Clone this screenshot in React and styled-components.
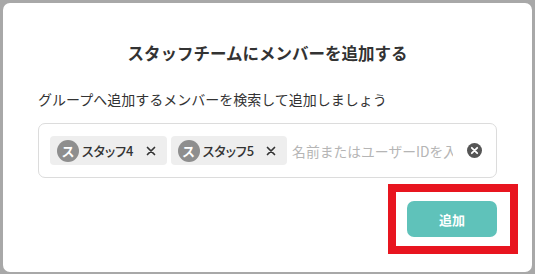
import React from "react";
import styled, { createGlobalStyle } from "styled-components";

const Global = createGlobalStyle`
  html, body { margin: 0; padding: 0; }
  body {
    background: #a8a8a8;
    font-family: "Noto Sans CJK JP", "Noto Sans", sans-serif;
    color: #333;
  }
  #root { padding: 3px 3px 2px 3px; }
`;

const Modal = styled.div`
  background: #fff;
  border-radius: 7px;
  height: 269px;
  box-sizing: border-box;
  padding: 38px 35px 0 35px;
  display: flex;
  flex-direction: column;
`;

const Title = styled.h2`
  margin: 0;
  font-size: 16.5px;
  line-height: 24px;
  font-weight: 700;
  text-align: center;
  color: #333;
`;

const Lead = styled.p`
  margin: 24px 0 0 0;
  font-size: 14px;
  line-height: 20px;
  color: #333;
`;

const Field = styled.div`
  margin-top: 14px;
  height: 55px;
  box-sizing: border-box;
  border: 1px solid #dcdcdc;
  border-radius: 7px;
  display: flex;
  align-items: center;
  padding: 0 14px 0 11px;
  gap: 4px;
`;

const Chip = styled.span`
  display: inline-flex;
  align-items: center;
  height: 29px;
  padding: 0 11px 0 7px;
  background: #eeeeee;
  border-radius: 4px;
  flex-shrink: 0;
`;

const Avatar = styled.span`
  width: 22px;
  height: 22px;
  border-radius: 50%;
  background: #8e8e8e;
  color: #fff;
  font-size: 13px;
  font-weight: 700;
  display: inline-flex;
  align-items: center;
  justify-content: center;
  margin-right: 3px;
`;

const ChipName = styled.span`
  font-size: 13px;
  font-weight: 500;
  color: #333;
  font-feature-settings: "palt";
`;

const Remove = styled.span`
  display: inline-flex;
  margin-left: 12px;
  color: #333;
`;

const Search = styled.input`
  flex: 1;
  min-width: 0;
  border: none;
  outline: none;
  background: transparent;
  font-family: inherit;
  font-size: 13.8px;
  color: #333;
  padding: 0 0 0 1px;
  &::placeholder { color: #b5b5b5; }
`;

const Clear = styled.span`
  display: inline-flex;
  flex-shrink: 0;
  margin-left: 10px;
`;

const Footer = styled.div`
  display: flex;
  justify-content: flex-end;
  margin-top: 6px;
  margin-right: -21px;
`;

const Highlight = styled.div`
  border: 8px solid #e8151f;
  padding: 9px 13px 9px 11px;
`;

const AddButton = styled.button`
  width: 90px;
  height: 36px;
  border: none;
  border-radius: 7px;
  background: #5fc2ba;
  color: #fff;
  font-family: inherit;
  font-size: 13px;
  font-weight: 700;
  display: block;
`;

const XIcon = () => (
  <svg width="10" height="10" viewBox="0 0 10 10">
    <path d="M1.5 1.5 L8.5 8.5 M8.5 1.5 L1.5 8.5" stroke="#333" strokeWidth="1.7" strokeLinecap="round" />
  </svg>
);

const ClearIcon = () => (
  <svg width="15" height="15" viewBox="0 0 15 15">
    <circle cx="7.5" cy="7.5" r="7.5" fill="#555" />
    <path d="M4.8 4.8 L10.2 10.2 M10.2 4.8 L4.8 10.2" stroke="#fff" strokeWidth="1.8" strokeLinecap="round" />
  </svg>
);

const members = ["スタッフ4", "スタッフ5"];

export default function App() {
  return (
    <>
      <Global />
      <Modal>
        <Title>スタッフチームにメンバーを追加する</Title>
        <Lead>グループへ追加するメンバーを検索して追加しましょう</Lead>
        <Field>
          {members.map((m) => (
            <Chip key={m}>
              <Avatar>ス</Avatar>
              <ChipName>{m}</ChipName>
              <Remove><XIcon /></Remove>
            </Chip>
          ))}
          <Search placeholder="名前またはユーザーIDを入力" />
          <Clear><ClearIcon /></Clear>
        </Field>
        <Footer>
          <Highlight>
            <AddButton>追加</AddButton>
          </Highlight>
        </Footer>
      </Modal>
    </>
  );
}
